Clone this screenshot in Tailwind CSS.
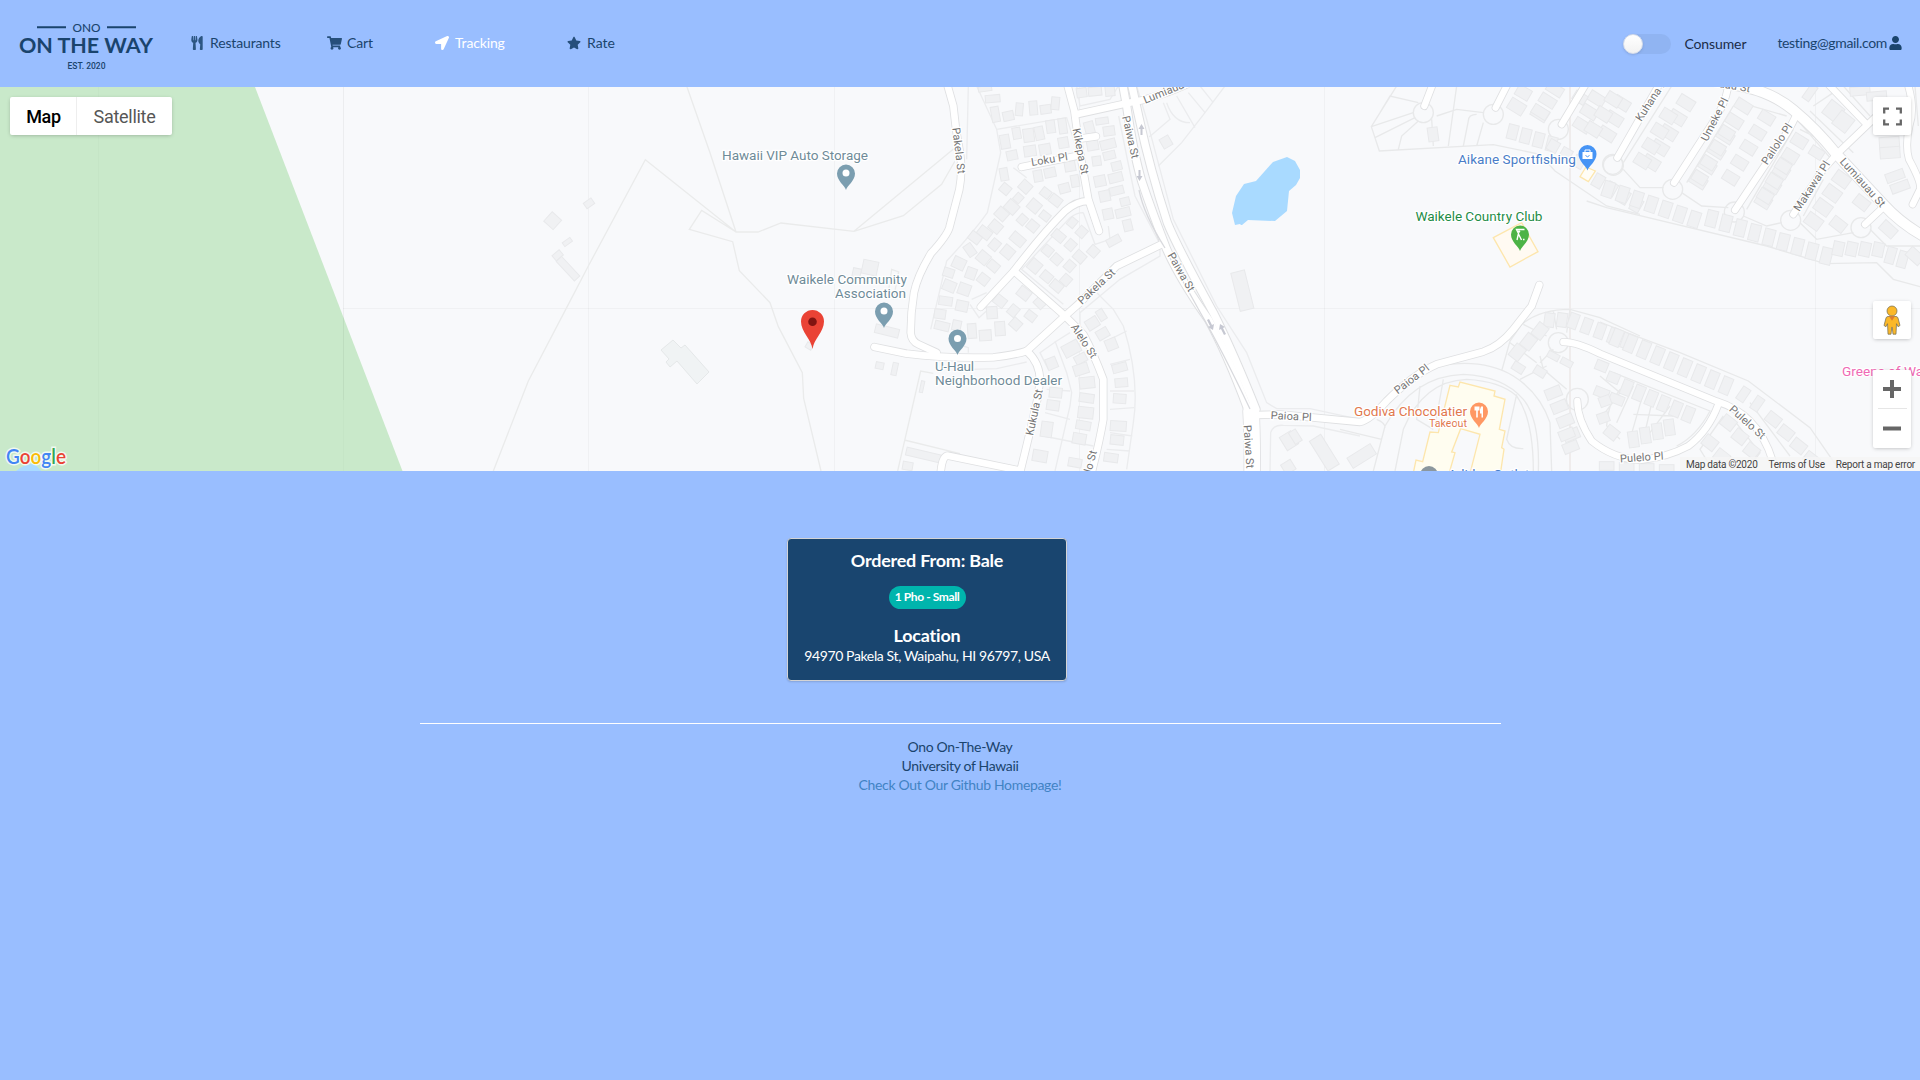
<!DOCTYPE html>
<html lang="en">
<head>
<meta charset="utf-8">
<title>Ono On-The-Way</title>
<script src="https://cdn.jsdelivr.net/npm/@tailwindcss/browser@4"></script>
</head>
<body class="min-h-screen overflow-hidden bg-[#99beff] font-['Lato',sans-serif] text-sm text-[#1a446d]">

<svg class="hidden">
  <defs>
    <path id="pin" d="M0 13C-1.2 8.500-9 4-9-3.500A9 9 0 0 1 9-3.500C9 4 1.200 8.500 0 13Z"/>
  </defs>
</svg>

<header class="flex h-[87px] items-center pr-[18px]">
  <svg class="ml-[18px] h-[60px] w-[140px] fill-[#1a446d] font-['Lato']" viewBox="18 13.500 140 60">
    <path d="M37 26.700h29M107 26.700h29" stroke="#1a446d" stroke-width="2"/>
    <text x="72.500" y="31.200" font-size="12" textLength="28" lengthAdjust="spacingAndGlyphs" class="font-medium">ONO</text>
    <text x="19" y="52.500" font-size="21.500" textLength="134" class="font-bold">ON THE WAY</text>
    <text x="67.500" y="68.200" font-size="9" textLength="38" lengthAdjust="spacingAndGlyphs" class="font-['Roboto'] font-medium">EST. 2020</text>
  </svg>
  <nav class="flex items-center pb-px leading-[14px]">
    <a class="ml-[33px] flex w-[136px] items-center gap-[7px] tracking-[-0.15px]"><svg class="h-[14px] w-3 opacity-85" viewBox="0 0 416 512" fill="currentColor"><path d="M207.900 15.200c.8 4.700 16.100 94.500 16.100 128.800 0 52.300-27.800 89.600-68.900 104.600L168 486.700c.7 13.700-10.200 25.300-24 25.300H80c-13.700 0-24.700-11.500-24-25.300l12.900-238.100C27.700 233.600 0 196.200 0 144 0 109.600 15.300 19.900 16.100 15.200 19.300-5.100 61.400-5.400 64 16.300v141.200c1.300 3.400 15.100 3.200 16 0 1.400-25.300 7.900-139.200 8-141.800 3.300-20.800 44.700-20.800 47.900 0 .2 2.700 6.600 116.500 8 141.800.9 3.200 14.800 3.400 16 0V16.300c2.600-21.600 44.800-21.400 48-1.100zm119.200 285.700l-15 185.100c-1.200 14 9.900 26 23.900 26h56c13.300 0 24-10.700 24-24V24c0-13.200-10.700-24-24-24-82.500 0-221.400 178.500-64.900 300.900z"/></svg>Restaurants</a>
    <a class="flex w-[108px] items-center gap-[5px] tracking-[-0.15px]"><svg class="h-[14px] w-[15px] opacity-90" viewBox="0 0 576 512" fill="currentColor"><path d="M528.120 301.320l47.270-208C578.800 78.300 567.400 64 552 64H159.200l-9.200-44.800C147.800 8 137.900 0 126.500 0H24C10.700 0 0 10.700 0 24v16c0 13.300 10.700 24 24 24h69.900l70.200 343.400C147.300 417.100 136 435.200 136 456c0 30.900 25.100 56 56 56s56-25.100 56-56c0-15.700-6.400-29.800-16.800-40h209.600C430.400 426.200 424 440.300 424 456c0 30.900 25.100 56 56 56s56-25.100 56-56c0-22.200-12.900-41.300-31.600-50.400l5.500-24.300c3.400-15-8-29.300-23.400-29.300H218.100l-6.500-32h293.100c11.200 0 20.900-7.800 23.400-18.700z"/></svg>Cart</a>
    <a class="flex w-[132px] items-center gap-[6px] tracking-[-0.15px] text-white"><svg class="h-[14px] w-[14px]" viewBox="0 0 512 512" fill="currentColor"><path d="M444.500 3.500L28.700 195.400c-48 22.400-32 92.800 19.200 92.800h175.900v175.900c0 51.200 70.400 67.200 92.800 19.200L508.500 67.500c16-38.400-25.600-80-64-64z"/></svg>Tracking</a>
    <a class="flex items-center gap-[6px]"><svg class="h-[14px] w-[14px] opacity-90" viewBox="0 0 576 512" fill="currentColor"><path d="M259.300 17.800L194 150.200 47.900 171.500c-26.200 3.800-36.700 36.100-17.700 54.600l105.700 103-25 145.500c-4.500 26.300 23.200 46 46.400 33.700L288 439.600l130.700 68.700c23.200 12.200 50.900-7.400 46.400-33.700l-25-145.500 105.700-103c19-18.500 8.500-50.800-17.700-54.600L382 150.200 316.700 17.800c-11.700-23.600-45.600-23.900-57.400 0z"/></svg>Rate</a>
  </nav>
  <div class="ml-auto flex items-center leading-[14px]">
    <span class="mr-[13px] h-5 w-12 rounded-full bg-[#90b4f2]"><span class="block size-5 rounded-full border border-[#d5dcea] bg-gradient-to-b from-white to-[#f2f2f2] shadow-sm"></span></span>
    <span class="mr-[31px] tracking-[-0.1px] text-[#1b2c48]">Consumer</span>
    <a class="flex items-center gap-0.5 pb-px tracking-[-0.34px]">testing@gmail.com<svg class="h-[14px] w-[13px]" viewBox="0 0 448 512" fill="currentColor"><path d="M224 256c70.700 0 128-57.300 128-128S294.700 0 224 0 96 57.300 96 128s57.300 128 128 128zm89.600 32h-16.700c-22.200 10.200-46.900 16-72.900 16s-50.600-5.800-72.900-16h-16.700C60.200 288 0 348.200 0 422.400V464c0 26.500 21.500 48 48 48h352c26.500 0 48-21.500 48-48v-41.600c0-74.200-60.200-134.400-134.400-134.400z"/></svg></a>
  </div>
</header>

<section class="relative h-[384px] overflow-hidden bg-[#f8f9fb] font-['Roboto',sans-serif]">
  <svg class="block h-[384px] w-[1920px]" viewBox="0 87 1920 384" fill="none">
    <defs>
      <g id="roads-west" transform="translate(880 86) scale(.33333)">
        <path d="M203 0L220 60 228 130 240 200Q248 260 238 310L208 425Q200 450 153 502Q112 570 102 620Q92 680 92 740Q94 765 115 775L170 800"/>
        <path d="M-17 783L80 803Q200 818 340 814Q400 808 440 795L555 690 600 650Q660 590 710 540L845 475"/>
        <path d="M563 0L583 75 600 200 625 340 657 435M590 85L740 52 790 42Q860 22 920-5"/>
        <path d="M425 243L600 208M600 158L648 151M625 345Q590 345 555 375Q490 440 402 555L302 663"/>
        <path d="M402 555L555 690 610 745Q640 800 670 880L670 1000Q660 1060 635 1160"/>
        <path d="M440 795Q480 830 480 885L472 940Q450 1040 420 1160M182 1160Q186 1109 204 1109L412 1152"/>
        <path d="M1130 987L1200 985 1440 1008Q1470 1002 1520 945Q1600 865 1670 835L1810 797Q1860 780 1900 730L1955 660 1978 597"/>
      </g>
      <g id="roads-paiwa" transform="translate(880 86) scale(.33333)">
        <path d="M729 0L740 60Q760 200 785 285Q815 375 860 490Q900 580 985 700Q1040 800 1102 965"/>
        <path d="M756 0L778 100Q810 250 862 410Q890 480 1000 680Q1060 800 1128 970"/>
      </g>
      <path id="road-paiwa-south" transform="translate(880 86) scale(.33333)" d="M1113 975Q1118 1050 1116 1190"/>
      <g id="roads-east" transform="translate(1600 86) scale(.33333)">
        <path d="M-500-10L-527 60M-275-10L-313 65M-40-10L-115 115M175 0L52 215M385 0Q375 60 335 115L222 290"/>
        <path d="M590 85Q560 150 510 215L405 372M710 205L670 250 580 385M852 362L795 415"/>
        <path d="M685-5L800 115M710 205L830 90M925 0Q945 70 928 120Q915 180 927 220Q965 290 960 310L938 355"/>
        <path d="M-110 768Q-70 768 0 803L350 946Q410 965 450 1005Q495 1050 518 1125M355 955Q325 1035 265 1080Q200 1115 120 1122Q40 1118-25 1065Q-68 1000-68 945"/>
      </g>
      <path id="road-lumiauau" transform="translate(1600 86) scale(.33333)" d="M370-8Q500 5 580 72Q650 130 710 205L850 355Q900 410 970 450"/>
    </defs>

    <path d="M0 87H255L402.500 471H0Z" fill="#c9e9ca"/>
    <path d="M16 471Q25 463 35 464L41 471Z" fill="#a9daff"/>
    <path d="M98.500 87V471M343.500 87V471" stroke="#000" stroke-opacity=".015"/>
    <path d="M343.500 87V400M588.500 87V471M834.500 87V471M1079.500 87V471M1324.500 87V471M1815.500 87V471M343 308.500H1920" stroke="#000" stroke-opacity=".03"/>
    <path d="M1570 87V471" stroke="#efecec" stroke-width="2"/>

    <g transform="translate(480 86) scale(.33333)" stroke="#eaebeb" stroke-width="4">
      <path d="M620 0L690 200 768 438 834 438 903 411 1122 436 1270 389 1385 295 1425 225M1122 436L1425 185M40 1155L145 885 260 665 325 540 496 221 768 438M768 438L665 373 628 430 758 467 778 554 870 650 895 722 967 860 971 937 1023 1155"/>
      <path d="M1253 1155L1322 855 1360 862M1273 1062L1440 1103M1225 620L1235 550 1256 558 1240 640"/>
    </g>
    <g transform="translate(880 86) scale(.33333)" stroke="#ebecee" stroke-width="4">
      <path d="M290 0L350 130 362 200 322 380Q280 440 200 525L152 730M265 0L260 220M350 130L560 95 590 190M400 245L440 275M590 0L600 60 690 40 715 0M1035 0L975 80 905 170 835 240M850 50L870 100Q800 160 810 150M860 50Q880 110 930 110M890 30L945 125M925 20L975 80M960 0L1000 50"/>
      <path d="M716 90L740 210 765 330 835 465M770 0L800 100Q850 290 880 400L1010 660 1100 800 1160 950 1190 968 1290 968 1440 1000M610 380Q590 380 570 395L425 550 550 655M610 380L645 475 690 460 685 420M270 655L297 695 325 670M275 640L320 620M840 490L840 510 720 580 600 680 600 720M640 610L700 670 730 720Q780 880 760 1010L740 1150M570 740L530 765 480 800 505 850M525 765L560 860 575 920 570 960 525 1155M740 735L690 760M750 820L690 835M762 915L690 915M762 965L690 970M757 1050L690 1040M750 1095L680 1090M500 910L570 915M495 980L570 1000M490 1050L640 1080M1170 1155L1172 1040Q1180 1015 1210 1018L1300 1020 1440 1050M265 800L265 785 250 780M270 850L350 848 440 828"/>
    </g>
    <g transform="translate(1340 86) scale(.33333)" stroke="#e8e9ea" stroke-width="4">
      <path d="M170 0L94 122 118 195 460 176 600 205 645 255 800 360 900 385M94 122L220 80M105 155L225 95M175 190L185 150 235 105M120 80L150 30 235 50M280 180L275 100M350 0L325 180M290 90L350 70 430 80M410 85Q385 85 385 105L370 180M410 180L430 110"/>
      <circle cx="250" cy="80" r="30"/><circle cx="460" cy="85" r="30"/><circle cx="655" cy="130" r="30"/><circle cx="820" cy="238" r="30"/><circle cx="655" cy="770" r="30"/><circle cx="712" cy="940" r="33"/>
      <path d="M485 855L510 765 545 715Q600 670 690 670L780 695 900 750M290 840Q430 815 520 870Q600 920 630 1010L635 1155M100 1155L135 1020Q220 870 370 865Q490 870 550 940Q600 1000 595 1155M165 1155L190 1030Q250 885 380 880Q480 885 530 930Q580 1000 580 1155M0 1030L125 1060M110 1000Q135 1010 135 1025M530 925L500 1060Q510 1090 550 1088M240 900L230 1000 280 1030M310 880L285 1020M640 675L650 730M690 670L680 740M550 715L620 750M510 770L590 830M540 880L620 840M600 810L610 850 680 910M600 830L640 790"/>
    </g>
    <g transform="translate(1600 86) scale(.33333)" stroke="#e8e9ea" stroke-width="4">
      <path d="M-40 345L20 365 500 480 675 533 830 530 880 580 960 602M0 708L80 740 240 800 445 885 630 1025 720 1155"/>
      <circle cx="38" cy="235" r="30"/><circle cx="218" cy="310" r="30"/><circle cx="403" cy="378" r="30"/><circle cx="572" cy="403" r="30"/><circle cx="783" cy="425" r="30"/>
      <path d="M70 250L120 305 190 305M245 320L305 360 385 365M430 390L500 420 545 410M600 410L650 460 760 440M810 430L860 480 960 480M215 0L70 230M400 60L260 290M420 50L560 90M580 130L440 370M600 130L700 180M670 280L610 390M720 240L850 370 810 400M590 100L690 215M630 75L760 200M945 0L955 120M730 0L810 90M640 60L700 20"/>
      <path d="M40 860L330 975Q290 1050 230 1080M0 870L60 920 0 1000M100 900L50 1010M130 920L90 1060M160 930L130 1060M210 960L150 1040M220 990L100 985M20 1020L60 1060M60 910Q20 960 20 1020M370 990L300 1090 340 1155M400 1000L480 1100 440 1155M450 950L570 1110"/>
    </g>

    <g id="buildings" fill="#f0f1f3" stroke="#e8e9eb" stroke-width="1"></g>
    <path d="M661 350l12-10 8 8 4-3 24 27-12 12-20-23-7 6-4-5 3-3z" fill="#f0f3f4" stroke="#e5e8e9"/>
    <path d="M1254 225H1241L1240 224 1235 225 1232 213 1236 196 1244 184 1256 181 1273 162 1287 157 1295 161 1300 170 1300 178 1296 185 1289 191 1287 211 1275 221 1248 220 1242 225Z" fill="#a9daff"/>

    <g transform="translate(1340 86) scale(.33333)" stroke="#fde6ad" stroke-width="4">
      <path d="M330 898L355 903 360 888 465 915 462 930 495 940 478 1030 495 1035 485 1085 492 1090 480 1170H218L228 1122 248 1127 270 1038 295 1040Z" fill="#fffdf0"/>
      <path d="M362 1028L420 1045 388 1170H325L345 1100 335 1098Z" fill="#f8f9fb"/>
      <path d="M460 455L545 410 594 497 510 543Z" fill="#fffaf2"/>
      <path d="M738 243L766 255 745 287 720 272Z" fill="#fffdf6"/>
    </g>

    <g stroke="#dfe0e2" stroke-linecap="round" stroke-linejoin="round">
      <use href="#roads-west" stroke-width="25"/><use href="#roads-paiwa" stroke-width="28"/><use href="#road-paiwa-south" stroke-width="52"/><use href="#roads-east" stroke-width="24"/><use href="#road-lumiauau" stroke-width="35"/>
    </g>
    <g stroke="#fff" stroke-linecap="round" stroke-linejoin="round">
      <use href="#roads-west" stroke-width="20"/><use href="#roads-paiwa" stroke-width="22"/><use href="#road-paiwa-south" stroke-width="47"/><use href="#roads-east" stroke-width="19"/><use href="#road-lumiauau" stroke-width="30"/>
    </g>
    <path d="M1139 190Q1144 215 1165 248M1170 258L1200 312Q1222 350 1250 409" stroke="#d9dade" stroke-width="1.300"/>
    <g fill="#c6c8d2">
      <path d="M1141.500 124l3 5h-2v6h-2v-6h-2z"/>
      <path d="M1139.500 181l-3-5h2v-6h2v6h2z"/>
      <path d="M1213 330l-5-3 2-1-3-6 2-1 3 6 2-1zM1220 324l5 3-2 1 3 6-2 1-3-6-2 1z"/>
    </g>

    <g fill="#757575" font-size="11" stroke="#fff" stroke-width="2.500" paint-order="stroke" text-anchor="middle" letter-spacing=".1" class="font-['Roboto']">
      <text transform="translate(955 151) rotate(83)">Pakela St</text>
      <text transform="translate(1050 163) rotate(-9)">Loku Pl</text>
      <text transform="translate(1077 152) rotate(79)">Kikepa St</text>
      <text transform="translate(1127 138) rotate(77)">Paiwa St</text>
      <text transform="translate(1178 274) rotate(60)">Paiwa St</text>
      <text transform="translate(1099 289) rotate(-43)">Pakela St</text>
      <text transform="translate(1081 343) rotate(57)">Alelo St</text>
      <text transform="translate(1038 413) rotate(-78)">Kukula St</text>
      <text transform="translate(1092 470) rotate(-75)">Alelo St</text>
      <text transform="translate(1245 447) rotate(86)">Paiwa St</text>
      <text transform="translate(1291 420) rotate(3)">Paioa Pl</text>
      <text transform="translate(1414 382) rotate(-38)">Paioa Pl</text>
      <text transform="translate(1174 92) rotate(-22)">Lumiauau St</text>
      <text transform="translate(1655 101) rotate(-57)">Kuhana Pl</text>
      <text transform="translate(1718 121) rotate(-63)">Umeke Pl</text>
      <text transform="translate(1780 146) rotate(-57)">Pailolo Pl</text>
      <text transform="translate(1815 188) rotate(-57)">Makawai Pl</text>
      <text transform="translate(1860 185) rotate(48)">Lumiauau St</text>
      <text transform="translate(1719 87) rotate(10)">Lumiauau St</text>
      <text transform="translate(1745 425) rotate(42)">Pulelo St</text>
      <text transform="translate(1642 461) rotate(-4)">Pulelo Pl</text>
    </g>

    <g font-size="13.600" stroke="#fff" stroke-width="2.500" paint-order="stroke" class="font-['Roboto']">
      <g fill="#6f8b98">
        <text x="722" y="159.500" textLength="146">Hawaii VIP Auto Storage</text>
        <text x="787" y="284" textLength="120">Waikele Community</text>
        <text x="835" y="297.500" textLength="71">Association</text>
        <text x="935" y="371" textLength="39">U-Haul</text>
        <text x="935" y="384.500" textLength="127">Neighborhood Dealer</text>
      </g>
      <text x="1458" y="163.500" textLength="118" fill="#4a7dc8">Aikane Sportfishing</text>
      <text x="1415.500" y="220.500" textLength="127" fill="#1e8c46">Waikele Country Club</text>
      <g fill="#e1784d">
        <text x="1354" y="416" textLength="113">Godiva Chocolatier</text>
        <text x="1429" y="426.500" font-size="10.800" textLength="38">Takeout</text>
      </g>
      <text x="1842" y="376" fill="#f06ab5">Greens of Waikele</text>
      <text x="1448" y="479" fill="#4a7dc8">Adidas Outlet</text>
    </g>
    <g fill="#7b9eb0">
      <use href="#pin" x="846" y="177"/><use href="#pin" x="884" y="315"/><use href="#pin" x="957.500" y="342"/>
      <circle cx="1429" cy="475" r="9" fill="#8b979e"/>
      <use href="#pin" x="1587.500" y="157.500" fill="#4694f5"/>
      <use href="#pin" x="1520" y="238" fill="#4cb346"/>
      <use href="#pin" x="1479" y="415" fill="#ff9863"/>
    </g>
    <g fill="#fff">
      <circle cx="846" cy="173" r="3.500"/><circle cx="884" cy="311" r="3.500"/><circle cx="957.500" cy="338.500" r="3.500"/>
      <path d="M1582.500 152h10v7h-10z"/>
      <path d="M1585 152v-2h5v2" fill="none" stroke="#fff"/>
      <path d="M1585.500 155.500q2 2.500 4 0" fill="none" stroke="#4694f5"/>
      <circle cx="1519" cy="231.500" r="1.200"/><path d="M1524.500 229.500h-8l2 4-1.500 6.500M1518.500 234l3 6M1523 239.500h1.500" stroke="#fff" stroke-width="1.400" fill="none"/>
      <path d="M1474.500 406.500h5v4h-1.700v7h-1.600v-7h-1.700zM1481 406.500h2v11h-1.500v-4h-1.500v-4z"/>
    </g>
    <path d="M812.500 349C811.300 339 801 332 801 321.500A11.500 11.500 0 0 1 824 321.500C824 332 813.700 339 812.500 349Z" fill="#ea4335"/>
    <circle cx="812.500" cy="321.700" r="4.300" fill="#811411"/>
    <text x="6" y="464" font-size="20.500" textLength="60" lengthAdjust="spacingAndGlyphs" stroke="#fff" stroke-opacity=".75" stroke-width="3" paint-order="stroke" class="font-['Lato'] font-semibold"><tspan fill="#4285f4">G</tspan><tspan fill="#ea4335">o</tspan><tspan fill="#fbbc05">o</tspan><tspan fill="#4285f4">g</tspan><tspan fill="#34a853">l</tspan><tspan fill="#ea4335">e</tspan></text>
  </svg>

  <div class="absolute top-2.5 left-2.5 flex h-[38px] rounded-xs bg-white text-lg leading-[39px] shadow-[0_1px_4px_-1px_rgba(0,0,0,0.3)]">
    <button class="w-[67px] border-r border-[#eee] pl-px font-medium tracking-[-0.3px] text-black">Map</button>
    <button class="w-[95px] tracking-[-0.3px] text-[#565656]">Satellite</button>
  </div>
  <button class="absolute top-2.5 left-[1873px] flex size-[38px] items-center justify-center rounded-xs bg-white shadow-[0_1px_4px_-1px_rgba(0,0,0,0.3)]">
    <svg class="size-[19px]" viewBox="0 0 19 18" fill="none" stroke="#666" stroke-width="2.300"><path d="M1.200 6V1.200H6M13 1.200h4.800V6M17.800 12v4.800H13M6 16.800H1.200V12"/></svg>
  </button>
  <button class="absolute top-[214px] left-[1873px] flex size-[38px] items-center justify-center rounded-xs bg-white shadow-[0_1px_4px_-1px_rgba(0,0,0,0.3)]">
    <svg class="h-[30px] w-[18px]" viewBox="0 0 18 30" fill="#fbb829" stroke="#6f6a55" stroke-width=".7"><path d="M5 11.500h8q1.500 0 2 1.500l2 7.500-2 1.200-1.500-3-.5 10.500H10l-.8-7h-.4l-.8 7H5l-.5-10.500-1.500 3-2-1.200L3 13q.5-1.500 2-1.500z"/><circle cx="9" cy="6" r="5"/><path d="M6 11.300h6l-3 4.500z" fill="#e07d2c" stroke="none"/></svg>
  </button>
  <div class="absolute top-[283px] left-[1873px] flex h-[78px] w-[38px] flex-col items-center rounded-xs bg-white shadow-[0_1px_4px_-1px_rgba(0,0,0,0.3)]">
    <svg class="h-[38px] w-[18px]" viewBox="0 0 18 38" stroke="#666" stroke-width="4"><path d="M0 19h18M9 10v18"/></svg>
    <div class="h-px w-[29px] bg-[#e6e6e6]"></div>
    <svg class="h-[39px] w-[18px]" viewBox="0 0 18 39" stroke="#666" stroke-width="4"><path d="M0 19.500h18"/></svg>
  </div>
  <div class="absolute right-0 bottom-0 flex h-[14px] gap-[11px] bg-[#f5f5f5]/80 pr-[5px] pl-1.5 text-[10px] leading-[16px] tracking-[-0.24px] text-[#444]">
    <span>Map data ©2020</span><span>Terms of Use</span><span>Report a map error</span>
  </div>
</section>

<main class="mt-[67px] ml-[787px] flex h-[143px] w-[280px] flex-col items-center rounded border border-[#d4d4d5] bg-[#19456f] pt-2.5 text-white shadow-[0_1px_2px_rgba(0,0,0,0.15)]">
  <h2 class="text-[17.96px] leading-[22px] font-bold tracking-[-0.2px]">Ordered From: Bale</h2>
  <span class="mt-[15px] flex h-[23px] w-[77px] items-center justify-center rounded-full bg-[#00b5ad] pb-px text-xs font-bold"><span class="tracking-[-0.4px]">1 Pho - Small</span></span>
  <h2 class="mt-[15px] text-[17.96px] leading-[22px] font-bold tracking-[-0.2px]">Location</h2>
  <p class="leading-[20px] tracking-[-0.37px]">94970 Pakela St, Waipahu, HI 96797, USA</p>
</main>

<footer class="mx-auto mt-[42px] w-[1081px] border-t border-white pt-[13px] text-center leading-[19px] tracking-[-0.33px]">
  <p>Ono On-The-Way</p>
  <p>University of Hawaii</p>
  <a class="text-[#4183c4]">Check Out Our Github Homepage!</a>
</footer>

<script>
  // Building footprints per map tile: [centre x, centre y, width, height, rotation], in thirds of a pixel.
  const tiles = [
    { x: 480, b: [[218,404,38,38,42],[327,352,28,20,-35],[262,468,28,14,-35],[233,508,28,20,-40],[264,548,22,80,-43],[1170,545,46,42,12],[1130,560,24,26,12],[1221,735,72,26,14],[1199,839,24,20,12],[1244,849,16,38,12],[1326,902,10,35,12],[988,780,20,18,30],[1330,1107,105,24,13],[1283,1140,30,24,10]] },
    { x: 880, b: [[315,8,40,16,-8],[338,38,44,22,-5],[346,85,24,46,-10],[418,70,22,38,5],[460,66,24,42,-5],[497,70,32,26,-8],[526,52,24,38,5],[385,90,32,28,-12],[410,142,24,34,-10],[375,167,28,42,-10],[396,208,32,28,-12],[446,148,32,40,-8],[478,142,26,40,-12],[512,122,26,38,-8],[548,120,24,46,-8],[550,170,30,32,-10],[450,195,36,32,-8],[495,190,34,32,-10],[372,265,24,38,-10],[474,270,26,34,-10],[510,260,34,28,-12],[570,240,32,32,-10],[553,307,32,28,-15],[585,285,24,36,-10],[605,20,30,28,-8],[645,16,40,26,-6],[690,15,28,30,-6],[628,125,28,36,-15],[666,105,38,20,-8],[687,135,34,28,-8],[638,178,34,30,-10],[684,175,46,28,-14],[650,225,26,28,-8],[688,208,36,24,-14],[710,240,30,26,-14],[660,285,34,32,-12],[707,275,42,28,-14],[674,330,32,32,-12],[710,314,42,24,-14],[735,347,28,24,-14],[684,384,30,32,-12],[729,380,44,26,-14],[743,418,26,34,-14],[376,309,30,28,40],[436,302,34,32,42],[415,336,24,26,42],[395,363,38,34,42],[365,384,36,32,42],[427,401,26,28,42],[497,321,30,26,38],[527,343,36,28,38],[463,360,36,34,40],[495,390,30,24,38],[458,420,32,30,40],[413,460,44,30,40],[347,422,36,32,40],[314,440,40,30,38],[285,455,36,28,38],[344,476,32,28,-50],[383,498,36,34,40],[270,492,26,38,-35],[310,515,36,34,40],[340,540,34,28,40],[237,532,38,34,25],[273,562,30,34,20],[310,580,32,30,38],[206,560,32,26,18],[208,600,38,32,22],[253,610,36,34,20],[197,645,40,26,8],[246,660,36,32,12],[180,684,34,28,8],[186,720,44,26,14],[230,718,26,30,12],[276,735,26,44,-4],[316,748,36,32,-4],[360,728,30,42,-4],[336,680,32,36,-4],[360,645,36,30,38],[400,674,32,28,-50],[432,622,38,32,38],[407,714,32,30,42],[452,690,32,26,38],[480,650,28,32,-45],[577,410,24,28,40],[605,438,28,30,42],[536,450,38,28,40],[572,477,28,30,42],[503,494,30,28,40],[530,520,30,28,42],[599,512,34,30,42],[464,540,36,36,40],[569,540,28,30,42],[500,572,34,28,40],[558,582,28,30,42],[530,600,36,28,40],[640,496,30,30,42],[701,464,42,24,-28],[637,712,38,32,-32],[664,687,22,34,-32],[668,743,36,30,-30],[694,775,34,34,-22],[574,788,52,38,-28],[602,818,36,26,-28],[515,832,32,34,-22],[603,850,44,32,-18],[719,845,44,26,-15],[621,890,46,34,-6],[724,890,38,26,-5],[527,920,38,30,6],[620,936,44,26,8],[719,938,38,28,4],[519,958,38,30,8],[617,980,46,34,6],[500,1030,34,46,8],[610,1018,44,26,10],[715,1020,48,30,4],[598,1058,40,32,10],[711,1062,40,28,6],[480,1110,44,34,10],[585,1130,40,26,10],[693,1115,42,26,8],[858,168,30,32,-30],[1087,614,42,118,-14],[1227,1064,40,46,-32],[1246,1052,24,40,-32],[1333,1100,40,105,-32],[1225,1143,34,34,-32],[1430,1120,34,30,-32]] },
    { x: 1340, b: [[279,145,30,42,-8],[65,1110,82,36,-32]] },
  ];
  // Rows of similar houses: tile x, start x, start y, step x, step y, count, width, height, rotation.
  const rows = [
    [1340, 518,138, 39,12, 4, 30,44,14], [1340, 775,285, 38,24, 4, 30,40,30],
    [1340, 640,180, 38,24, 3, 32,34,30],
    [1340, 550,20, -16,40, 1, 44,34,30], [1340, 530,62, 70,20, 2, 50,36,32],
    [1340, 645,10, -22,34, 3, 50,30,32], [1340, 770,38, -22,40, 3, 50,32,32],
    [1340, 845,52, -22,46, 3, 50,32,32], [1340, 720,35, -10,26, 1, 40,30,32],
    [1340, 628,702, 38,0, 2, 30,42,8], [1340, 700,705, 40,15, 5, 28,46,20],
    [1340, 600,735, -34,32, 3, 36,44,38], [1340, 535,845, 65,12, 2, 36,26,32],
    [1340, 640,920, 18,42, 4, 48,32,-22], [1340, 680,1045, 12,38, 2, 46,30,-22],
    [1340, 640,810, 40,20, 2, 36,20,28], [1340, 785,920, 45,20, 2, 44,28,22],
    [1600, 25,310, 43,15, 7, 32,48,18], [1600, 335,398, 43,14, 9, 32,50,14],
    [1600, 715,488, 40,1, 4, 32,42,12], [1600, 872,508, 36,12, 2, 28,50,16],
    [1600, 40,40, -30,45, 3, 46,34,32],
    [1600, 258,50, -26,45, 5, 50,34,32], [1600, 205,90, -26,45, 4, 46,34,32],
    [1600, 430,60, -27,45, 6, 50,32,32], [1600, 380,140, -27,45, 4, 44,32,32],
    [1600, 500,95, -27,45, 5, 46,32,32], [1600, 598,165, -27,45, 5, 46,34,32],
    [1600, 550,240, -27,45, 3, 44,34,32], [1600, 650,200, -27,45, 1, 42,30,32],
    [1600, 725,280, -28,42, 4, 50,38,36], [1600, 785,350, -70,65, 2, 46,34,38],
    [1600, 865,430, 80,80, 2, 50,34,42], [1600, 700,75, 30,32, 2, 50,50,38],
    [1600, 868,170, 2,30, 2, 60,34,-4], [1600, 885,270, 15,32, 2, 56,28,-20],
    [1600, 780,15, 50,15, 2, 60,26,-5], [1600, 630,20, 30,-16, 1, 24,50,35],
    [1600, 50,755, 41,18, 9, 30,52,22], [1600, 430,925, 42,28, 2, 26,44,34],
    [1600, 520,1000, 38,40, 4, 44,34,38], [1600, 80,905, 37,16, 6, 30,46,22],
    [1600, 100,1060, 36,-12, 4, 30,48,-8], [1600, 35,1040, 5,0, 1, 40,34,38],
    [1600, 385,1010, 35,42, 3, 42,36,38], [1600, 330,1070, 35,42, 2, 42,36,38],
    [1600, 5,840, 35,35, 2, 36,30,22], [1600, 15,945, -5,50, 2, 34,30,-20],
    [1600, 20,1140, 60,3, 4, 44,26,0],
  ];
  const host = document.getElementById('buildings');
  const add = (ox, [cx, cy, w, h, a]) => {
    const r = document.createElementNS('http://www.w3.org/2000/svg', 'rect');
    r.setAttribute('x', -w / 6); r.setAttribute('y', -h / 6);
    r.setAttribute('width', w / 3); r.setAttribute('height', h / 3);
    r.setAttribute('transform', `translate(${ox + cx / 3} ${86 + cy / 3}) rotate(${a})`);
    host.appendChild(r);
  };
  tiles.forEach(t => t.b.forEach(b => add(t.x, b)));
  rows.forEach(([ox, x, y, dx, dy, n, w, h, a]) => {
    for (let i = 0; i < n; i++) add(ox, [x + dx * i, y + dy * i, w, h, a]);
  });
</script>
</body>
</html>
